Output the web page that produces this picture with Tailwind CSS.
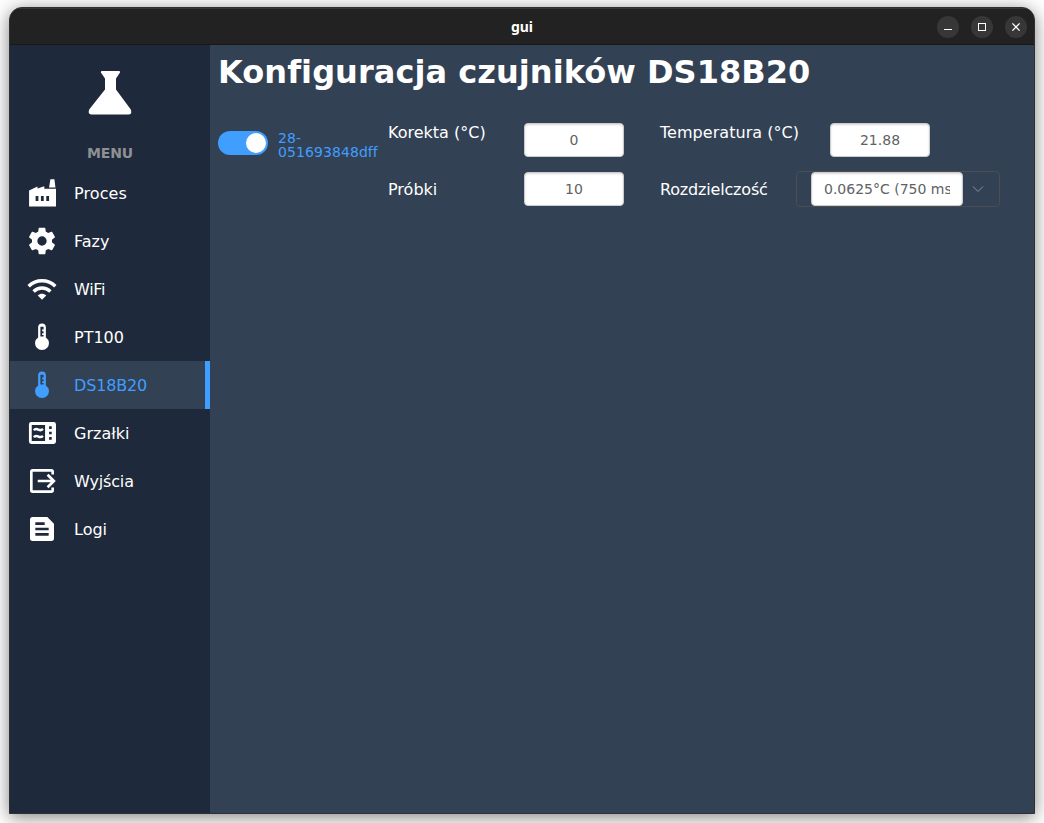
<!DOCTYPE html>
<html lang="pl">
<head>
<meta charset="utf-8">
<title>gui</title>
<script src="https://cdn.jsdelivr.net/npm/@tailwindcss/browser@4"></script>
</head>
<body class="h-[823px] w-[1044px] overflow-hidden bg-white pt-[7px] pl-[9px] font-['DejaVu_Sans',sans-serif] text-white">
<div class="flex h-[807px] w-[1026px] flex-col overflow-hidden rounded-t-[13px] border border-[#303030] bg-[#334155] shadow-[0_3px_18px_rgba(0,0,0,0.5)]">
  <header class="flex h-[37px] shrink-0 items-center border-t border-b border-t-[#373737] border-b-[#181818] bg-[#222222] pr-[7px] pl-[97px]">
    <h1 class="flex-1 text-center font-['Noto_Sans',sans-serif] text-[14px] leading-5 font-bold">gui</h1>
    <div class="flex gap-3">
      <button class="grid size-[22px] place-items-center rounded-full bg-[#373737]"><svg width="22" height="22"><path d="M7 13.5h8" stroke="#fff"/></svg></button>
      <button class="grid size-[22px] place-items-center rounded-full bg-[#373737]"><svg width="22" height="22"><rect x="7.5" y="7.5" width="7" height="7" fill="none" stroke="#fff"/></svg></button>
      <button class="grid size-[22px] place-items-center rounded-full bg-[#373737]"><svg width="22" height="22"><path d="M7.400 7.400l7.200 7.200M14.600 7.400l-7.200 7.200" stroke="#fff" stroke-width="1.300"/></svg></button>
    </div>
  </header>
  <div class="flex min-h-0 flex-1">
    <aside class="w-[200px] shrink-0 bg-[#1e293b]">
      <div class="flex h-[98px] justify-center pt-[26px]">
        <svg class="size-[44px]" viewBox="0 0 44 44" fill="#fff"><path d="M14 0h17q1.300 0 1 1.600L28 7.500v11L42.800 38.500q1.600 5-2.300 5H3.500q-4-0-2.300-5L17 18.500v-11L12.900 1.600Q12.600 0 14 0z"/></svg>
      </div>
      <h3 class="mb-[7px] h-[19px] text-center text-[14px] leading-[20px] font-bold tracking-[-0.1px] text-[#8d9094]">MENU</h3>
      <nav class="text-base">
        <a class="flex h-12 items-center gap-4 pl-4"><svg class="size-8" viewBox="0 0 24 24" fill="currentColor"><path fill-rule="evenodd" d="M2.300 10.200L8.600 7.200v1.500L13.700 6.900v2h8.800v13.200H2.300zM7.200 14.300V18h2.100v-3.700zM11.200 14.300V18h2.100v-3.700zM15.200 14.300V18h2.100v-3.700zM18.300 1.700h3l.8 6.200h-4.800z"/></svg><span class="pt-0.5 tracking-[0.1px]">Proces</span></a>
        <a class="flex h-12 items-center gap-4 pl-4"><svg class="size-8" viewBox="0 0 24 24" fill="currentColor"><path d="M12 15.500A3.500 3.500 0 0 1 8.500 12 3.500 3.500 0 0 1 12 8.500a3.500 3.500 0 0 1 3.500 3.500 3.500 3.500 0 0 1-3.500 3.500m7.430-2.530c.04-.32.07-.64.07-.97s-.03-.66-.07-1l2.110-1.630c.19-.15.24-.42.12-.64l-2-3.460c-.12-.22-.39-.31-.61-.22l-2.490 1c-.52-.39-1.060-.73-1.690-.98l-.37-2.650A.506.506 0 0 0 14 2h-4c-.25 0-.46.18-.5.42l-.37 2.650c-.63.25-1.170.59-1.690.98l-2.490-1c-.22-.09-.49 0-.61.22l-2 3.460c-.13.22-.07.49.12.64L4.570 11c-.04.34-.07.67-.07 1s.03.65.07.97l-2.110 1.660c-.19.15-.25.42-.12.64l2 3.460c.12.22.39.3.61.22l2.490-1.010c.52.4 1.060.74 1.690.99l.37 2.650c.04.24.25.42.5.42h4c.25 0 .46-.18.5-.42l.37-2.650c.63-.26 1.170-.59 1.690-.99l2.490 1.010c.22.08.49 0 .61-.22l2-3.460c.12-.22.07-.49-.12-.64z"/></svg><span class="pt-0.5">Fazy</span></a>
        <a class="flex h-12 items-center gap-4 pl-4"><svg class="size-8" viewBox="0 0 24 24" fill="none" stroke="currentColor" stroke-width="2.600"><path d="M2 9.900c5.600-5.400 14.400-5.400 20 0M5.700 13.800c3.600-3.500 9-3.500 12.600 0"/><path fill="currentColor" stroke="none" d="M8.800 16.800c1.900-1.700 4.500-1.700 6.400 0L12 20z"/></svg><span class="pt-0.5 tracking-[-0.3px]">WiFi</span></a>
        <a class="flex h-12 items-center gap-4 pl-4"><svg class="size-8" viewBox="0 0 24 24" fill="currentColor"><path fill-rule="evenodd" d="M9.100 4.700a2.900 2.900 0 0 1 5.800 0v7.600a5.200 5.200 0 1 1-5.800 0zM10.800 4.300v7.400h2.400v-1.200h-1.100V9.200h1.100V7.700h-1.100V6.400h1.100V4.300z"/></svg><span class="pt-0.5">PT100</span></a>
        <a class="flex h-12 items-center gap-4 border-r-[5px] border-[#409eff] bg-[#334155] pl-4 text-[#409eff]"><svg class="size-8" viewBox="0 0 24 24" fill="currentColor"><path fill-rule="evenodd" d="M9.100 4.700a2.900 2.900 0 0 1 5.800 0v7.600a5.200 5.200 0 1 1-5.800 0zM10.800 4.300v7.400h2.400v-1.200h-1.100V9.200h1.100V7.700h-1.100V6.400h1.100V4.300z"/></svg><span class="pt-0.5 tracking-[-0.15px]">DS18B20</span></a>
        <a class="flex h-12 items-center gap-4 pl-4"><svg class="size-8" viewBox="0 0 24 24" fill="currentColor"><path fill-rule="evenodd" d="M4 3.800h16.700a1.800 1.800 0 0 1 1.800 1.800v12.800a1.800 1.800 0 0 1-1.800 1.800H4a1.800 1.800 0 0 1-1.800-1.800V5.600A1.800 1.800 0 0 1 4 3.800zM4.300 6v12h10V6zM17.300 7v2h2V7zM17.300 11v2h2v-2zM17.300 15v2h2v-2z"/><path fill="none" stroke="currentColor" stroke-width="1.900" d="M5.900 9.900c1.300-1.600 2.200-1 3.400-.4s2 .8 3.400-.6M5.900 15.100c1.300-1.600 2.200-1 3.400-.4s2 .8 3.400-.6"/></svg><span class="pt-0.5">Grzałki</span></a>
        <a class="flex h-12 items-center gap-4 pl-4"><svg class="size-8" viewBox="0 0 24 24" fill="none" stroke="currentColor" stroke-width="2"><path d="M20 7.200V5a1 1 0 0 0-1-1H5a1 1 0 0 0-1 1v14a1 1 0 0 0 1 1h14a1 1 0 0 0 1-1v-2.200M8.800 12h12M16.200 7.300l4.700 4.700-4.700 4.700"/></svg><span class="pt-0.5 tracking-[-0.15px]">Wyjścia</span></a>
        <a class="flex h-12 items-center gap-4 pl-4"><svg class="size-8" viewBox="0 0 24 24" fill="currentColor"><path fill-rule="evenodd" d="M5 3h11l5 5v11a2 2 0 0 1-2 2H5a2 2 0 0 1-2-2V5a2 2 0 0 1 2-2zM7 7v2h7V7zM7 11v2h10v-2zM7 15v2h10v-2z"/></svg><span class="pt-0.5">Logi</span></a>
      </nav>
    </aside>
    <main class="flex-1 pl-2">
      <h2 class="h-[70px] pt-[8px] text-[32px] leading-[38px] font-bold tracking-[0.05px] whitespace-nowrap">Konfiguracja czujników DS18B20</h2>
      <div class="flex">
        <div class="flex h-[56px] w-[170px] items-center gap-[10px]">
          <div class="flex h-6 w-[50px] shrink-0 items-center justify-end rounded-full bg-[#409eff] pr-[2px]"><span class="size-5 rounded-full bg-white"></span></div>
          <span class="w-[100px] pt-[3px] text-[14px] leading-[14px] tracking-[0.08px] text-[#409eff]">28-<br>051693848dff</span>
        </div>
        <div class="grid grid-cols-[136px_136px_136px_1fr] grid-rows-[48px_48px] pt-[7px] text-base leading-5">
          <label class="pt-[1px]">Korekta (°C)</label>
          <input class="mt-[1px] h-[34px] w-[100px] rounded-[4px] border border-[#cccccc] bg-white text-center text-[14px] text-[#606266] shadow-[inset_0_1px_2px_rgba(0,0,0,.15)]" value="0">
          <label class="pt-[1px] tracking-[0.04px] whitespace-nowrap">Temperatura (°C)</label>
          <input class="mt-[1px] ml-[34px] h-[34px] w-[100px] rounded-[4px] border border-[#cccccc] bg-white text-center text-[14px] text-[#606266] shadow-[inset_0_1px_2px_rgba(0,0,0,.15)]" value="21.88">
          <label class="pt-[10px]">Próbki</label>
          <input class="mt-[2px] h-[34px] w-[100px] rounded-[4px] border border-[#cccccc] bg-white text-center text-[14px] text-[#606266] shadow-[inset_0_1px_2px_rgba(0,0,0,.15)]" value="10">
          <label class="pt-[10px] tracking-[-0.18px]">Rozdzielczość</label>
          <div class="mt-[1px] flex h-9 w-[204px] items-center rounded-[4px] border border-[#4c4d4f] pl-[14px]">
            <input class="h-[34px] w-[152px] rounded-[4px] border border-[#cccccc] bg-white px-3 text-[14px] text-[#606266] shadow-[inset_0_1px_2px_rgba(0,0,0,.15)]" value="0.0625°C (750 ms)">
            <svg class="ml-2 size-[14px]" viewBox="0 0 14 14" fill="none" stroke="#8d9095"><path d="M2 4.500l5 5 5-5"/></svg>
          </div>
        </div>
      </div>
    </main>
  </div>
</div>
</body>
</html>
